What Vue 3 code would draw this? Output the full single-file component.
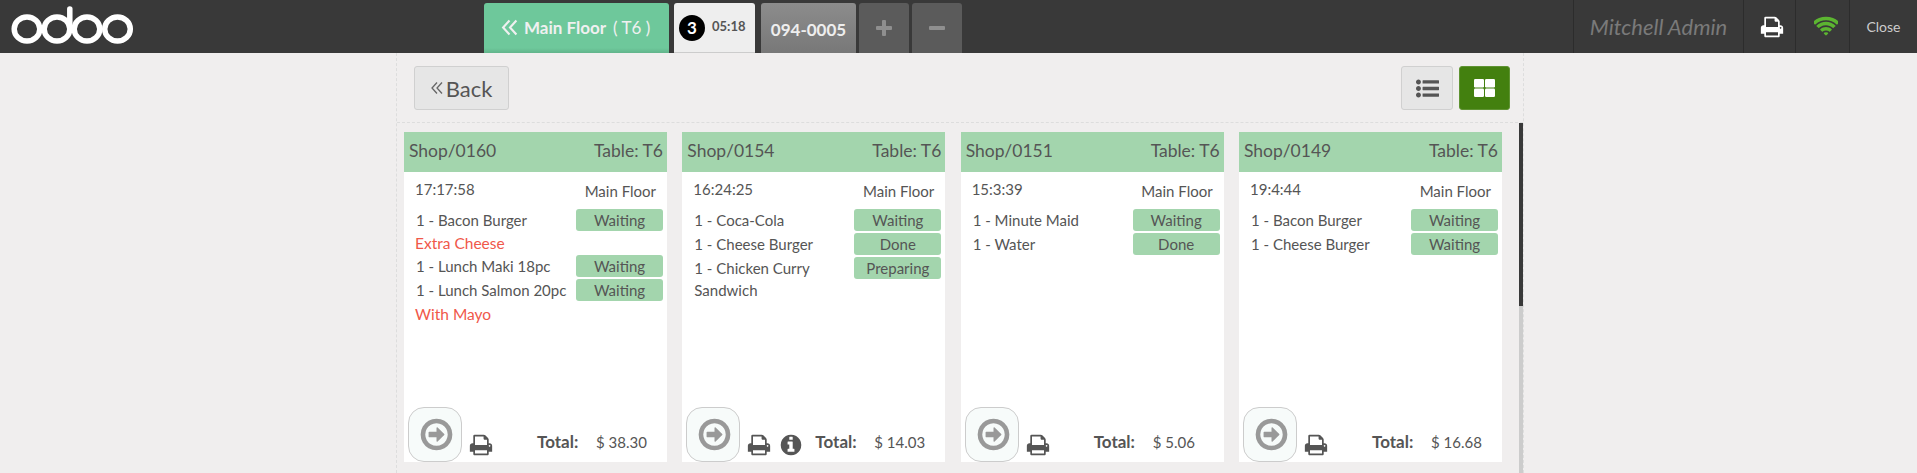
<template>
  <div class="pos">
    <header class="topbar">
      <svg class="logo" viewBox="0 0 134 53" width="134" height="53">
        <g fill="none" stroke="#fff" stroke-width="5.5">
          <ellipse cx="27" cy="29" rx="12.8" ry="12" />
          <ellipse cx="57" cy="29" rx="12.8" ry="12" />
          <ellipse cx="87" cy="29" rx="12.8" ry="12" />
          <ellipse cx="117.500" cy="29" rx="12.8" ry="12" />
          <path d="M69.800 28V9" stroke-linecap="round" />
        </g>
      </svg>

      <nav class="tabs">
        <div class="floor-tab">
          <svg class="chev" viewBox="0 0 16 16" width="17" height="17">
            <path d="M8 1.500 2 8l6 6.500M14.500 1.500 8.500 8l6 6.500" fill="none" stroke="currentColor" stroke-width="2" />
          </svg>
          <span class="floor-name">Main Floor</span>
          <span class="floor-table">( T6 )</span>
        </div>
        <div class="ticket">
          <span class="count">3</span>
          <span class="clock">05:18</span>
        </div>
        <div class="order-tab">094-0005</div>
        <div class="square-tab"><span class="plus"></span></div>
        <div class="square-tab"><span class="minus"></span></div>
      </nav>

      <div class="status">
        <div class="cashier">Mitchell Admin</div>
        <div class="status-btn print">
          <svg viewBox="0 0 1792 1792" width="24" height="24"><path :d="printerPath" fill="#fff" /></svg>
        </div>
        <div class="status-btn wifi">
          <svg viewBox="0 0 1792 1792" width="24" height="24"><path :d="wifiPath" fill="#5cb531" /></svg>
        </div>
        <div class="close">Close</div>
      </div>
    </header>

    <main class="board">
      <div class="toolbar">
        <button class="back">
          <svg viewBox="0 0 12 14" width="12" height="14">
            <path d="M6 1.500 1 7l5 5.500M11 1.500 6 7l5 5.500" fill="none" stroke="#666" stroke-width="1.300" />
          </svg>
          <span>Back</span>
        </button>
        <div class="views">
          <button class="view-btn">
            <svg viewBox="0 0 1792 1792" width="23" height="23"><path :d="listPath" fill="#555" /></svg>
          </button>
          <button class="view-btn active">
            <svg viewBox="0 0 21 18" width="21" height="18">
              <rect x="0" y="0" width="10" height="8.500" rx="1.200" fill="#fff" />
              <rect x="11" y="0" width="10" height="8.500" rx="1.200" fill="#fff" />
              <rect x="0" y="9.500" width="10" height="8.500" rx="1.200" fill="#fff" />
              <rect x="11" y="9.500" width="10" height="8.500" rx="1.200" fill="#fff" />
            </svg>
          </button>
        </div>
      </div>

      <div class="orders">
        <article v-for="order in orders" :key="order.name" class="card">
          <div class="card-head">
            <span>{{ order.name }}</span>
            <span>Table: T6</span>
          </div>
          <div class="card-info">
            <span class="time">{{ order.time }}</span>
            <span class="floor">Main Floor</span>
          </div>
          <div class="lines">
            <template v-for="line in order.lines" :key="line.text">
              <div class="line">
                <span class="line-name">{{ line.text }}</span>
                <span class="state">{{ line.state }}</span>
              </div>
              <div v-if="line.note" :class="['note', { far: line.far }]">{{ line.note }}</div>
            </template>
          </div>
          <div class="card-foot">
            <button class="next">
              <svg viewBox="0 0 1792 1792" width="37" height="37"><path :d="arrowPath" fill="#999" /></svg>
            </button>
            <div class="foot-icons">
              <svg viewBox="0 0 1792 1792" width="24" height="24"><path :d="printerPath" fill="#555" /></svg>
              <svg v-if="order.info" class="info" viewBox="0 0 1792 1792" width="24" height="24"><path :d="infoPath" fill="#555" /></svg>
            </div>
            <span class="total-label">Total:</span>
            <span class="total">{{ order.total }}</span>
          </div>
        </article>
        <div class="scrollbar"><div class="thumb"></div></div>
      </div>
    </main>
  </div>
</template>

<script setup>
const printerPath = 'M448 1536h896v-256h-896v256zm0-640h896v-384h-160q-40 0-68-28t-28-68v-160h-640v640zm1152 64q0-26-19-45t-45-19-45 19-19 45 19 45 45 19 45-19 19-45zm128 0v416q0 13-9.5 22.5t-22.5 9.5h-224v160q0 40-28 68t-68 28h-960q-40 0-68-28t-28-68v-160h-224q-13 0-22.5-9.5t-9.5-22.5v-416q0-79 56.5-135.5t135.5-56.5h64v-544q0-40 28-68t68-28h672q40 0 88 20t76 48l152 152q28 28 48 76t20 88v256h64q79 0 135.5 56.5t56.5 135.5z'
const wifiPath = 'M896 1523q-20 0-93-73.5t-73-93.5q0-32 62.5-54t103.5-22 103.5 22 62.5 54q0 20-73 93.5t-93 73.5zm270-271q-2 0-40-25t-101.5-50-128.5-25-128.5 25-101 50-40.5 25q-18 0-93.5-75t-75.5-93q0-13 10-23 78-77 196-121t233-44 233 44 196 121q10 10 10 23 0 18-75.5 93t-93.5 75zm273-272q-11 0-23-8-136-105-252-154.5t-268-49.5q-85 0-170.5 22t-149 53-113.5 62-79 53-31 22q-17 0-92-75t-75-93q0-12 10-22 132-132 320-205t380-73 380 73 320 205q10 10 10 22 0 18-75 93t-92 75zm271-271q-11 0-22-9-179-157-371.5-236.5t-420.5-79.5-420.5 79.5-371.5 236.5q-11 9-22 9-17 0-92.5-75t-75.5-93q0-13 10-23 187-186 445-288t527-102 527 102 445 288q10 10 10 23 0 18-75.5 93t-92.5 75z'
const infoPath = 'M1152 1376v-160q0-14-9-23t-23-9h-96v-512q0-14-9-23t-23-9h-320q-14 0-23 9t-9 23v160q0 14 9 23t23 9h96v320h-96q-14 0-23 9t-9 23v160q0 14 9 23t23 9h448q14 0 23-9t9-23zm-128-896v-160q0-14-9-23t-23-9h-192q-14 0-23 9t-9 23v160q0 14 9 23t23 9h192q14 0 23-9t9-23zm640 416q0 209-103 385.5t-279.5 279.5-385.5 103-385.5-103-279.5-279.5-103-385.5 103-385.5 279.5-279.5 385.5-103 385.5 103 279.5 279.5 103 385.5z'
const arrowPath = 'M1280 896q0 14-9 23l-320 320q-9 9-23 9-13 0-22.5-9.5t-9.5-22.5v-192h-352q-13 0-22.5-9.5t-9.5-22.5v-192q0-13 9.5-22.5t22.5-9.5h352v-192q0-14 9-23t23-9q12 0 24 10l319 319q9 9 9 23zm160 0q0-148-73-273t-198-198-273-73-273 73-198 198-73 273 73 273 198 198 273 73 273-73 198-198 73-273zm224 0q0 209-103 385.5t-279.5 279.5-385.5 103-385.5-103-279.5-279.5-103-385.5 103-385.5 279.5-279.5 385.5-103 385.5 103 279.5 279.5 103 385.5z'
const listPath = 'M384 1408q0 80-56 136t-136 56-136-56-56-136 56-136 136-56 136 56 56 136zm0-512q0 80-56 136t-136 56-136-56-56-136 56-136 136-56 136 56 56 136zm1408 416v192q0 13-9.5 22.5t-22.5 9.5h-1216q-13 0-22.5-9.5t-9.5-22.5v-192q0-13 9.5-22.5t22.5-9.5h1216q13 0 22.5 9.5t9.5 22.5zm-1408-928q0 80-56 136t-136 56-136-56-56-136 56-136 136-56 136 56 56 136zm1408 416v192q0 13-9.5 22.5t-22.5 9.5h-1216q-13 0-22.5-9.5t-9.5-22.5v-192q0-13 9.5-22.5t22.5-9.5h1216q13 0 22.5 9.5t9.5 22.5zm0-512v192q0 13-9.5 22.5t-22.5 9.5h-1216q-13 0-22.5-9.5t-9.5-22.5v-192q0-13 9.5-22.5t22.5-9.5h1216q13 0 22.5 9.5t9.5 22.5z'

const orders = [
  {
    name: 'Shop/0160',
    time: '17:17:58',
    total: '$ 38.30',
    lines: [
      { text: '1 - Bacon Burger', state: 'Waiting', note: 'Extra Cheese' },
      { text: '1 - Lunch Maki 18pc', state: 'Waiting' },
      { text: '1 - Lunch Salmon 20pc', state: 'Waiting', note: 'With Mayo', far: true },
    ],
  },
  {
    name: 'Shop/0154',
    time: '16:24:25',
    total: '$ 14.03',
    info: true,
    lines: [
      { text: '1 - Coca-Cola', state: 'Waiting' },
      { text: '1 - Cheese Burger', state: 'Done' },
      { text: '1 - Chicken Curry Sandwich', state: 'Preparing' },
    ],
  },
  {
    name: 'Shop/0151',
    time: '15:3:39',
    total: '$ 5.06',
    lines: [
      { text: '1 - Minute Maid', state: 'Waiting' },
      { text: '1 - Water', state: 'Done' },
    ],
  },
  {
    name: 'Shop/0149',
    time: '19:4:44',
    total: '$ 16.68',
    lines: [
      { text: '1 - Bacon Burger', state: 'Waiting' },
      { text: '1 - Cheese Burger', state: 'Waiting' },
    ],
  },
]
</script>

<style>
html, body {
  margin: 0;
  height: 100%;
  overflow: hidden;
  background: #f0eeee;
}
</style>

<style scoped>
.pos {
  height: 473px;
  display: flex;
  flex-direction: column;
  font-family: Lato, "Liberation Sans", sans-serif;
  color: #555;
  background: #f0eeee;
}

button {
  font-family: inherit;
  cursor: pointer;
  padding: 0;
}

.topbar {
  height: 53px;
  flex: none;
  display: flex;
  background: #393939;
}

.logo {
  flex: none;
  display: block;
}

.tabs {
  margin-left: 350px;
  display: flex;
  align-items: flex-end;
  height: 53px;
}

.floor-tab {
  width: 185px;
  height: 50px;
  box-sizing: border-box;
  padding: 0 0 2px 17px;
  display: flex;
  align-items: center;
  background: linear-gradient(#6ec89b 90%, #62b48b);
  border-radius: 3px 3px 0 0;
  color: #f0f0f0;
  font-size: 17px;
  font-weight: 700;
}

.chev {
  margin-right: 6px;
  flex: none;
}

.floor-table {
  margin-left: 7px;
  font-weight: 400;
}

.ticket {
  margin-left: 5px;
  width: 81px;
  height: 50px;
  box-sizing: border-box;
  padding-left: 5px;
  display: flex;
  background: #eee;
  border-bottom: 1px solid #ccc;
  border-radius: 3px 3px 0 0;
}

.count {
  margin-top: 12px;
  width: 26px;
  height: 26px;
  border-radius: 50%;
  background: #000;
  color: #fff;
  font-size: 17px;
  font-weight: 700;
  line-height: 26px;
  text-align: center;
}

.clock {
  margin: 15px 0 0 7px;
  font-size: 13px;
  font-weight: 700;
  line-height: 16px;
}

.order-tab {
  margin-left: 6px;
  width: 95px;
  height: 50px;
  display: flex;
  align-items: center;
  justify-content: center;
  padding-top: 3px;
  box-sizing: border-box;
  background: linear-gradient(#8c8c8c, #787878);
  border-radius: 3px 3px 0 0;
  color: #eee;
  font-size: 17px;
  font-weight: 700;
}

.square-tab {
  margin-left: 3px;
  width: 50px;
  height: 50px;
  display: flex;
  align-items: center;
  justify-content: center;
  background: #5b5b5b;
  border-radius: 3px 3px 0 0;
}

.plus,
.minus {
  position: relative;
  display: block;
  width: 16px;
  height: 4px;
  border-radius: 1px;
  background: #8f8f8f;
}

.plus::after {
  content: "";
  position: absolute;
  left: 6px;
  top: -6px;
  width: 4px;
  height: 16px;
  border-radius: 1px;
  background: #8f8f8f;
}

.status {
  margin-left: auto;
  display: flex;
}

.cashier,
.status-btn,
.close {
  display: flex;
  align-items: center;
  justify-content: center;
  border-left: 1px solid #2c2c2c;
  box-sizing: border-box;
}

.cashier {
  width: 170px;
  color: #7a7a7a;
  font-size: 22px;
  font-style: italic;
}

.status-btn.print {
  width: 52px;
  padding-left: 5px;
}

.status-btn.wifi {
  width: 54px;
  padding-left: 7px;
}

.close {
  width: 68px;
  color: #ccc;
  font-size: 14px;
}

.board {
  width: 1128px;
  margin-left: 396px;
  flex: 1;
  box-sizing: border-box;
  border-left: 1px dashed #ddd;
  border-right: 1px dashed #ddd;
}

.toolbar {
  height: 70px;
  box-sizing: border-box;
  padding: 13px 13px 0 17px;
  display: flex;
  justify-content: space-between;
  align-items: flex-start;
  border-bottom: 1px dashed #ddd;
}

.back,
.view-btn {
  height: 44px;
  box-sizing: border-box;
  display: flex;
  align-items: center;
  justify-content: center;
  background: #e6e6e6;
  border: 1px solid #d0d0d0;
  border-radius: 3px;
}

.back {
  width: 95px;
  gap: 3px;
  color: #555;
  font-size: 22px;
}

.views {
  display: flex;
  gap: 6px;
}

.view-btn {
  width: 51px;
}

.view-btn:first-child {
  width: 52px;
}

.view-btn.active {
  background: #43800f;
  border-color: #5f9333;
}

.orders {
  position: relative;
  padding: 9px 0 0 7px;
  display: grid;
  grid-template-columns: repeat(4, 263px);
  column-gap: 15.330px;
}

.card {
  height: 330px;
  display: flex;
  flex-direction: column;
  background: #fff;
}

.card-head {
  height: 40px;
  flex: none;
  box-sizing: border-box;
  padding: 0 4px 3px 5px;
  display: flex;
  align-items: center;
  justify-content: space-between;
  background: #a3d5ad;
  font-size: 17.500px;
}

.card-info {
  height: 37px;
  flex: none;
  box-sizing: border-box;
  padding: 6px 11px 0 11px;
  display: flex;
  justify-content: space-between;
  font-size: 15px;
  line-height: 22px;
}

.floor {
  padding-top: 2px;
}

.line {
  display: flex;
  margin-bottom: 2px;
  padding: 0 4px 0 12px;
  font-size: 15px;
  line-height: 22px;
}

.line-name {
  flex: 1;
  min-width: 0;
}

.line-name + .state {
  margin-left: 6px;
}

.state {
  flex: none;
  width: 87px;
  height: 22px;
  border-radius: 3px;
  background: #a3d5ad;
  text-align: center;
}

.note {
  margin-bottom: 2px;
  padding-left: 11px;
  color: #f0584a;
  font-size: 15.500px;
  line-height: 20px;
}

.note.far {
  margin-top: 3px;
}

.card-foot {
  margin-top: auto;
  padding-left: 4px;
  display: flex;
  align-items: flex-end;
  font-size: 15px;
}

.next {
  flex: none;
  width: 54px;
  height: 55px;
  box-sizing: border-box;
  padding-left: 3px;
  display: flex;
  align-items: center;
  justify-content: center;
  background: #f7fbfa;
  border: 1px solid #ccc;
  border-radius: 16px;
}

.foot-icons {
  flex: none;
  width: 68px;
  margin-left: 7px;
  height: 34px;
  display: flex;
  align-items: center;
  gap: 8px;
}

.total-label {
  width: 59px;
  margin-bottom: 9px;
  font-size: 17px;
  font-weight: 700;
  line-height: 22px;
}

.total {
  margin-bottom: 9px;
  line-height: 22px;
}

.scrollbar {
  position: absolute;
  right: 0;
  top: 0;
  width: 4px;
  height: 350px;
  background: #ccc;
}

.thumb {
  height: 183px;
  background: #393939;
}
</style>
